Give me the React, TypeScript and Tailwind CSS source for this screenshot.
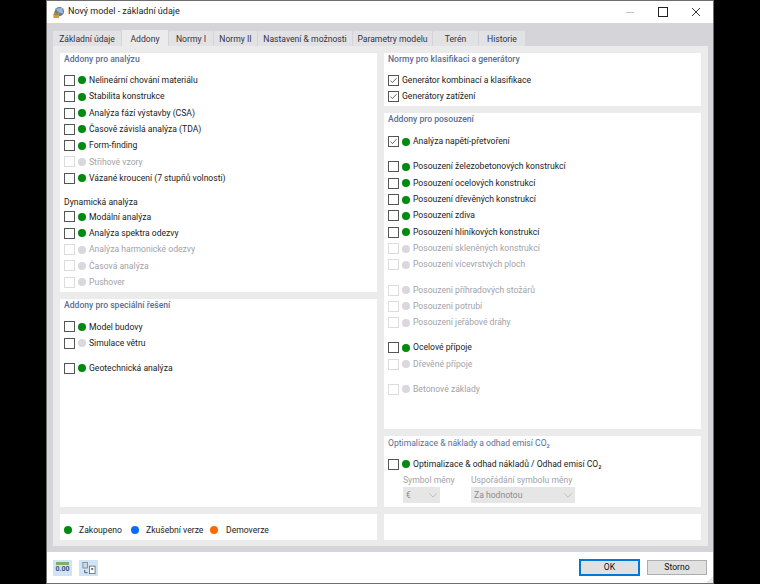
import React from "react";

type Item = { t: string; on?: boolean; dis?: boolean; checked?: boolean; gap?: boolean; nodot?: boolean };

function Box({ dis, checked }: { dis?: boolean; checked?: boolean }) {
  return (
    <span className={"w-[11px] h-[11px] shrink-0 border flex items-center justify-center bg-white " + (dis ? "border-[#dcdcdc]" : "border-[#555555]")}>
      {checked && (
        <svg viewBox="0 0 11 11" className="w-[11px] h-[11px]">
          <path d="M1.8 5.6 L4.2 8 L9.2 2.6" fill="none" stroke="#444" strokeWidth="1" />
        </svg>
      )}
    </span>
  );
}

function Dot({ c }: { c: string }) {
  return <span className={"w-[8px] h-[8px] rounded-full shrink-0 block " + c} />;
}

function Row({ t, dis, checked, gap, nodot, on }: Item) {
  return (
    <div className={"h-[16.33px] flex items-center " + (gap ? "mt-[8.9px]" : "")}>
      <Box dis={dis} checked={checked} />
      {!nodot && <span className="ml-[3px]"><Dot c={on ? "bg-[#008a0e]" : "bg-[#d8d8de]"} /></span>}
      <span className={"ml-[3px] whitespace-nowrap " + (dis ? "text-[#a2a2a8]" : "text-[#1a1a22]")}>{t}</span>
    </div>
  );
}

function Heading({ children, plain }: { children: React.ReactNode; plain?: boolean }) {
  return <div className={"h-[13px] leading-[13px] mb-[6.2px] whitespace-nowrap text-[#5b6d96] " + (plain ? "" : "font-medium")}>{children}</div>;
}

const tabs = [
  ["Základní údaje", "w-[68px]"],
  ["Addony", "w-[46px]"],
  ["Normy I", "w-[44px]"],
  ["Normy II", "w-[43px]"],
  ["Nastavení & možnosti", "w-[94px]"],
  ["Parametry modelu", "w-[79px]"],
  ["Terén", "w-[45px]"],
  ["Historie", "w-[46px]"],
];

const analysis: Item[] = [
  { t: "Nelineární chování materiálu", on: true },
  { t: "Stabilita konstrukce", on: true },
  { t: "Analýza fází výstavby (CSA)", on: true },
  { t: "Časově závislá analýza (TDA)", on: true },
  { t: "Form-finding", on: true },
  { t: "Střihové vzory", dis: true },
  { t: "Vázané kroucení (7 stupňů volnosti)", on: true },
];
const dyn: Item[] = [
  { t: "Modální analýza", on: true },
  { t: "Analýza spektra odezvy", on: true },
  { t: "Analýza harmonické odezvy", dis: true },
  { t: "Časová analýza", dis: true },
  { t: "Pushover", dis: true },
];
const special: Item[] = [
  { t: "Model budovy", on: true },
  { t: "Simulace větru" },
  { t: "Geotechnická analýza", on: true, gap: true },
];
const norms: Item[] = [
  { t: "Generátor kombinací a klasifikace", nodot: true, checked: true },
  { t: "Generátory zatížení", nodot: true, checked: true },
];
const design: Item[] = [
  { t: "Analýza napětí-přetvoření", on: true, checked: true },
  { t: "Posouzení železobetonových konstrukcí", on: true, gap: true },
  { t: "Posouzení ocelových konstrukcí", on: true },
  { t: "Posouzení dřevěných konstrukcí", on: true },
  { t: "Posouzení zdiva", on: true },
  { t: "Posouzení hliníkových konstrukcí", on: true },
  { t: "Posouzení skleněných konstrukcí", dis: true },
  { t: "Posouzení vícevrstvých ploch", dis: true },
  { t: "Posouzení příhradových stožárů", dis: true, gap: true },
  { t: "Posouzení potrubí", dis: true },
  { t: "Posouzení jeřábové dráhy", dis: true },
  { t: "Ocelové přípoje", on: true, gap: true },
  { t: "Dřevěné přípoje", dis: true },
  { t: "Betonové základy", dis: true, gap: true },
];

function Chevron() {
  return (
    <svg viewBox="0 0 10 6" className="w-[8px] h-[5px]">
      <path d="M0.5 0.5 L5 5 L9.5 0.5" fill="none" stroke="#b4b4b4" strokeWidth="1" />
    </svg>
  );
}

function Panel({ h, children }: { h: string; children?: React.ReactNode }) {
  return <div className={"bg-white px-[4px] flex flex-col " + h}>{children}</div>;
}

export default function App() {
  return (
    <div
      className="w-[760px] h-[584px] bg-black flex justify-center overflow-hidden text-[8.6px]"
      style={{ fontFamily: "Roboto, sans-serif" }}
    >
      <div className="w-[668px] h-[584px] bg-white border border-[#6e6e6e] flex flex-col">
        {/* title bar */}
        <div className="h-[22px] shrink-0 flex items-center">
          <svg viewBox="0 0 14 14" className="ml-[5px] w-[13px] h-[13px]">
            <circle cx="8" cy="6" r="5" fill="#5b7fa8" />
            <path d="M4 3 L11 2 L12 8 L7 7 Z" fill="#9fb7d2" />
            <rect x="1.5" y="8" width="6" height="5" fill="#c9a23a" />
            <rect x="3" y="6.5" width="3" height="2.5" fill="none" stroke="#8a7a3a" />
          </svg>
          <span className="ml-[3px] text-[9px] text-[#222]">Nový model - základní údaje</span>
          <div className="ml-auto flex items-center">
            <span className="w-[8px] h-px bg-[#c4c4c4] mr-[24px]" />
            <span className="w-[10px] h-[10px] border border-[#222] mr-[23px]" />
            <svg viewBox="0 0 10 10" className="w-[10px] h-[10px] mr-[12px]">
              <path d="M1 1 L9 9 M9 1 L1 9" stroke="#222" strokeWidth="0.9" />
            </svg>
          </div>
        </div>
        {/* tabbed area */}
        <div className="h-[529px] shrink-0 bg-[#d5d5d9] px-[6px] pt-[7px] flex flex-col">
          <div className="h-[16px] flex gap-px items-end shrink-0">
            {tabs.map(([t, w], i) => (
              <div
                key={t}
                className={
                  "flex items-center justify-center whitespace-nowrap pt-[2px] text-[#333340] " + w + " " +
                  (i === 1 ? "h-[16px] bg-[#ebebeb] text-[#222]" : "h-[15px] bg-[#e2e2e4]")
                }
              >
                {t}
              </div>
            ))}
          </div>
          <div className="w-[655px] h-[500px] bg-[#ebebeb] p-[7px] grid grid-cols-[317px_317px] gap-x-[7px]">
            <div className="flex flex-col gap-[7px]">
              <Panel h="h-[239px]">
                <Heading>Addony pro analýzu</Heading>
                {analysis.map((r) => <Row key={r.t} {...r} />)}
                <div className="mt-[7.5px] h-[16px] flex items-center text-[#1a1a22]">Dynamická analýza</div>
                <div className="-mt-[1.2px]">{dyn.map((r) => <Row key={r.t} {...r} />)}</div>
              </Panel>
              <Panel h="h-[208px]">
                <Heading>Addony pro speciální řešení</Heading>
                <div className="mt-[0.6px]">{special.map((r) => <Row key={r.t} {...r} />)}</div>
              </Panel>
              <div className="bg-white h-[26px] px-[4px] pt-[6px] flex items-center">
                <Dot c="bg-[#008a0e]" />
                <span className="ml-[7px] w-[52px] text-[#222]">Zakoupeno</span>
                <Dot c="bg-[#0a6cff]" />
                <span className="ml-[7px] w-[64px] text-[#222]">Zkušební verze</span>
                <Dot c="bg-[#ff6a00]" />
                <span className="ml-[8px] text-[#222]">Demoverze</span>
              </div>
            </div>
            <div className="flex flex-col gap-[7px]">
              <Panel h="h-[53px]">
                <Heading>Normy pro klasifikaci a generátory</Heading>
                {norms.map((r) => <Row key={r.t} {...r} />)}
              </Panel>
              <Panel h="h-[316px]">
                <Heading>Addony pro posouzení</Heading>
                <div className="mt-[1.3px]">{design.map((r) => <Row key={r.t} {...r} />)}</div>
              </Panel>
              <Panel h="h-[71px] pt-[1px]">
                <Heading plain>Optimalizace &amp; náklady a odhad emisí CO₂</Heading>
                <Row t="Optimalizace & odhad nákladů / Odhad emisí CO₂" on />
                <div className="ml-[15px] mt-[0.6px] flex gap-[31px] text-[#a2a2a8]">
                  <div className="w-[37px] flex flex-col">
                    <span className="h-[14px] leading-[14px] whitespace-nowrap">Symbol měny</span>
                    <div className="h-[16px] bg-[#e6e6e6] flex items-center justify-between px-[3px] text-[#8c8c8c]">
                      <span>€</span><Chevron />
                    </div>
                  </div>
                  <div className="w-[104px] flex flex-col">
                    <span className="h-[14px] leading-[14px] whitespace-nowrap">Uspořádání symbolu měny</span>
                    <div className="h-[16px] bg-[#e6e6e6] flex items-center justify-between px-[3px] text-[#8c8c8c]">
                      <span>Za hodnotou</span><Chevron />
                    </div>
                  </div>
                </div>
              </Panel>
              <div className="bg-white h-[26px]" />
            </div>
          </div>
        </div>
        {/* footer */}
        <div className="flex-1 flex items-center pl-[6px]">
          <div className="w-[19px] h-[16px] bg-[#cfe5f7] flex flex-col items-center justify-center">
            <span className="w-[13px] h-[3px] bg-[#7fb069]" />
            <span className="text-[7px] leading-[9px] text-[#35506e] font-bold">0.00</span>
          </div>
          <div className="ml-[7px] w-[19px] h-[16px] bg-[#cfe5f7] flex items-center justify-center">
            <svg viewBox="0 0 16 14" className="w-[15px] h-[14px]">
              <rect x="2" y="1" width="5" height="6" fill="#cfd6dc" stroke="#6f7f8c" strokeWidth="0.8" />
              <path d="M4 9 L4 12 L7 12" fill="none" stroke="#555" />
              <rect x="9" y="5" width="6" height="8" fill="#fff" stroke="#55606a" strokeWidth="0.8" />
              <rect x="11" y="7" width="2" height="2" fill="#55606a" />
            </svg>
          </div>
          <div className="ml-auto flex items-center gap-[7px]">
            <button className="w-[61px] h-[17px] bg-[#e1e1e1] border-2 border-[#0078d7] flex items-center justify-center text-[#111]">OK</button>
            <button className="w-[60px] h-[15px] bg-[#e1e1e1] border border-[#adadad] flex items-center justify-center text-[#111]">Storno</button>
          </div>
          <svg viewBox="0 0 6 6" className="w-[6px] h-[6px] self-end">
            <path d="M4.5 0.5h1v1h-1z M2.5 2.5h1v1h-1z M4.5 2.5h1v1h-1z M0.5 4.5h1v1h-1z M2.5 4.5h1v1h-1z M4.5 4.5h1v1h-1z" fill="#a8a8a8" />
          </svg>
        </div>
      </div>
    </div>
  );
}
